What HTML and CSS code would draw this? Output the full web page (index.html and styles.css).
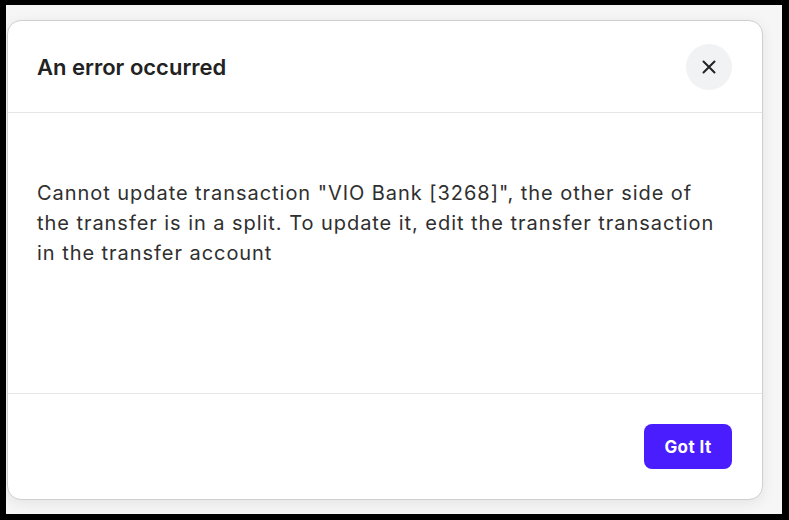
FILE: index.html
```html
<!DOCTYPE html>
<html lang="en">
<head>
<meta charset="utf-8">
<title>An error occurred</title>
<link rel="stylesheet" href="styles.css">
</head>
<body>
<div class="frame">
  <div class="modal" role="dialog" aria-labelledby="modal-title">
    <header class="modal-header">
      <h2 class="modal-title" id="modal-title">An error occurred</h2>
      <button class="close-btn" type="button" aria-label="Close">
        <svg width="16" height="16" viewBox="0 0 16 16" aria-hidden="true">
          <path d="M2.5 2.5 L13.5 13.5 M13.5 2.5 L2.5 13.5" stroke="#222" stroke-width="2" stroke-linecap="round" fill="none"/>
        </svg>
      </button>
    </header>
    <div class="modal-body">
      <p class="message">Cannot update transaction "VIO Bank [3268]", the other side of<br>the transfer is in a split. To update it, edit the transfer transaction<br>in the transfer account</p>
    </div>
    <footer class="modal-footer">
      <button class="primary-btn" type="button">Got It</button>
    </footer>
  </div>
</div>
</body>
</html>
```
FILE: styles.css
```css
* { box-sizing: border-box; }

html, body {
  margin: 0;
  padding: 0;
  background: #000;
}

body {
  width: 789px;
  height: 520px;
  overflow: hidden;
}

.frame {
  margin: 5px 7px 6px 6px;
  height: 509px;
  background: #f6f6f6;
  padding: 15px 19px 14px 1px;
}

.modal {
  height: 480px;
  background: #fff;
  border: 1px solid #cfcfcf;
  border-radius: 14px;
  box-shadow: 0 3px 14px rgba(0, 0, 0, 0.08);
  display: flex;
  flex-direction: column;
  font-family: Inter, "Noto Sans", sans-serif;
  color: #2b2b2b;
}

.modal-header {
  height: 92px;
  display: flex;
  align-items: center;
  justify-content: space-between;
  padding: 0 30px 0 29px;
  border-bottom: 1px solid #e6e6e6;
}

.modal-title {
  margin: 0;
  font-size: 22px;
  font-weight: 600;
  color: #222;
}

.close-btn {
  width: 46px;
  height: 46px;
  border: 0;
  border-radius: 50%;
  background: #f1f2f4;
  display: flex;
  align-items: center;
  justify-content: center;
  padding: 0;
}

.modal-body {
  height: 280px;
  padding: 65px 30px 0 29px;
}

.message {
  margin: 0;
  font-size: 20px;
  line-height: 30px;
  letter-spacing: 0.95px;
  color: #2f2f2f;
  white-space: nowrap;
}

.modal-footer {
  flex: 1;
  border-top: 1px solid #e6e6e6;
  display: flex;
  justify-content: flex-end;
  align-items: flex-start;
  padding: 30px 30px 0 0;
}

.primary-btn {
  width: 88px;
  height: 45px;
  border: 0;
  border-radius: 8px;
  background: #4a1dff;
  color: #fff;
  font-family: Inter, "Noto Sans", sans-serif;
  font-size: 17px;
  font-weight: 700;
  letter-spacing: 0.4px;
}
```
